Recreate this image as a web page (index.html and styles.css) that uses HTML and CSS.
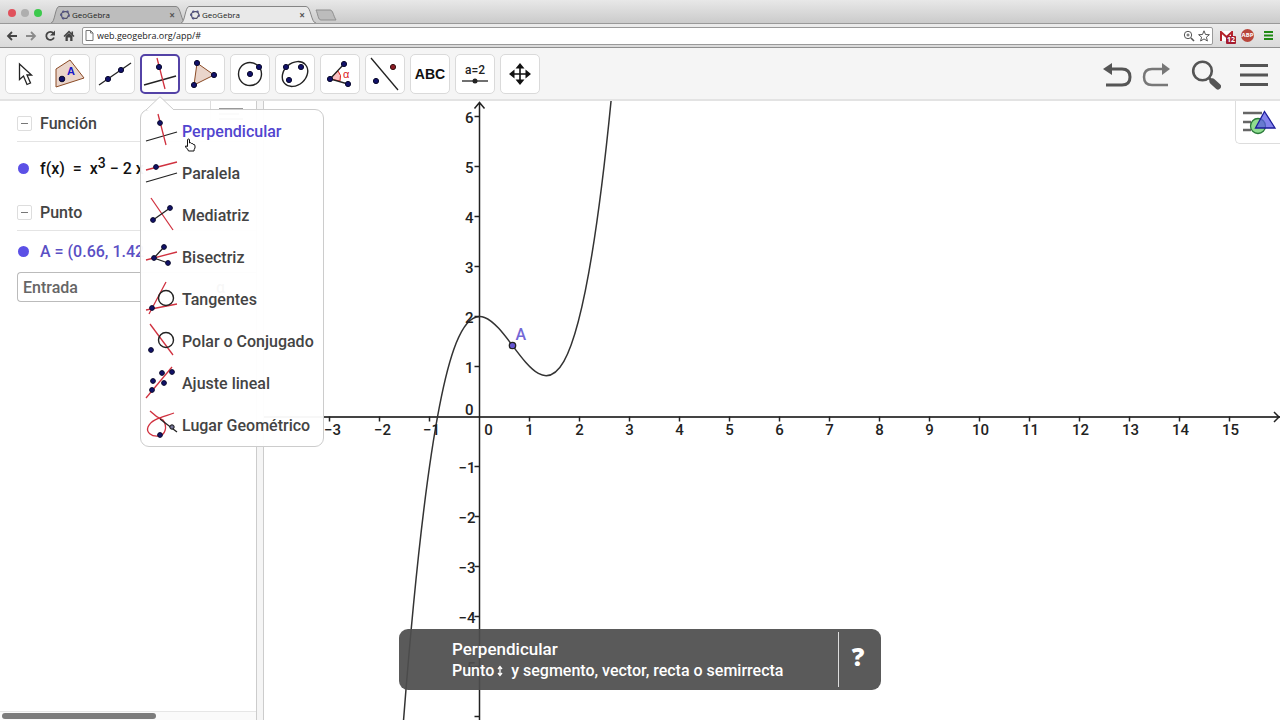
FILE: index.html
```html
<!DOCTYPE html>
<html lang="es">
<head>
<meta charset="utf-8">
<title>GeoGebra</title>
<link rel="stylesheet" href="styles.css">
</head>
<body>
<div class="app">
  <header class="browser">
    <div class="tabstrip">
      <span class="light red"></span><span class="light gray"></span><span class="light green"></span>
      <div class="tabs">
        <div class="tab">
          <svg class="tab-shape" viewBox="0 0 136 17" preserveAspectRatio="none"><path d="M0 17C4 17 4 1 8 .5H126C131 .5 131 17 136 17" fill="#bdbdbd" stroke="#858585"/></svg>
          <svg class="favicon" viewBox="0 0 12 12"><path d="M4 2L9 2L11 6L8 10L3 10L1 5Z" fill="none" stroke="#556" stroke-width="1.4"/><g fill="#558"><circle cx="4" cy="2" r="1.4"/><circle cx="9" cy="2" r="1.4"/><circle cx="10.500" cy="7" r="1.400"/><circle cx="4" cy="10" r="1.4"/><circle cx="1.500" cy="6" r="1.400"/></g></svg>
          <span class="tab-title">GeoGebra</span><button class="close" aria-label="Cerrar">×</button>
        </div>
        <div class="tab active">
          <svg class="tab-shape" viewBox="0 0 136 17" preserveAspectRatio="none"><path d="M0 17C4 17 4 1 8 .5H126C131 .5 131 17 136 17" fill="#e9e9e9" stroke="#858585"/></svg>
          <svg class="favicon" viewBox="0 0 12 12"><path d="M4 2L9 2L11 6L8 10L3 10L1 5Z" fill="none" stroke="#556" stroke-width="1.4"/><g fill="#558"><circle cx="4" cy="2" r="1.4"/><circle cx="9" cy="2" r="1.4"/><circle cx="10.500" cy="7" r="1.400"/><circle cx="4" cy="10" r="1.4"/><circle cx="1.500" cy="6" r="1.400"/></g></svg>
          <span class="tab-title">GeoGebra</span><button class="close" aria-label="Cerrar">×</button>
        </div>
        <svg class="newtab" viewBox="0 0 22 12"><path d="M1 1H15C18 1 18 6 21 11H6C3 11 3 5 1 1Z" fill="#bcbcbc" stroke="#8e8e8e"/></svg>
      </div>
    </div>
    <div class="navbar">
      <button class="nav" aria-label="Atrás"><svg viewBox="0 0 12 12"><path d="M6 2L2 6L6 10M2 6H11" fill="none" stroke="#444" stroke-width="1.8"/></svg></button>
      <button class="nav" aria-label="Adelante"><svg viewBox="0 0 12 12"><path d="M6 2L10 6L6 10M10 6H1" fill="none" stroke="#8a8a8a" stroke-width="1.8"/></svg></button>
      <button class="nav" aria-label="Recargar"><svg viewBox="0 0 12 12"><path d="M9.500 3.500A4 4 0 1 0 10 7.500" fill="none" stroke="#444" stroke-width="1.800"/><path d="M11 .5V5.500H6Z" fill="#444"/></svg></button>
      <button class="nav" aria-label="Inicio"><svg viewBox="0 0 12 12"><path d="M1 6.500L6 1.500L11 6.500M9.300 5V1.500" fill="none" stroke="#444" stroke-width="1.500"/><path d="M2.500 6L6 3L9.500 6V11H7.200V7.500H4.800V11H2.500Z" fill="#444"/></svg></button>
      <div class="address">
        <svg class="page-icon" viewBox="0 0 9 11"><path d="M1 .5H5.500L8 3V10.500H1ZM5.500 .5V3H8" fill="#fff" stroke="#777"/></svg>
        <input class="url" type="text" aria-label="Dirección" value="web.geogebra.org/app/#">
        <svg class="omni" viewBox="0 0 12 12"><circle cx="5" cy="5" r="3.700" fill="none" stroke="#555"/><path d="M5 3.500V6.500M3.500 5H6.500" stroke="#555"/><path d="M8 8L11 11" stroke="#555" stroke-width="1.600"/></svg>
        <svg class="omni" viewBox="0 0 12 12"><path d="M6 .8L7.500 4.500L11.400 4.700L8.400 7.200L9.400 11L6 8.900L2.600 11L3.600 7.200L.6 4.700L4.500 4.500Z" fill="none" stroke="#555"/></svg>
      </div>
      <span class="mail"><svg viewBox="0 0 13 10"><rect width="13" height="10" fill="#fff"/><path d="M1 10V1L6.500 6L12 1V10" fill="none" stroke="#b5232c" stroke-width="2"/></svg><span class="count">12</span></span>
      <span class="abp">ABP</span>
      <button class="chrome-menu" aria-label="Menú"><svg viewBox="0 0 9 9"><path d="M0 1H9M0 4.500H9M0 8H9" stroke="#1f8a14" stroke-width="1.800"/></svg></button>
    </div>
  </header>

  <nav class="toolbar">
    <button class="tool" aria-label="Mover"><svg viewBox="0 0 38 38"><path d="M13.500 9V24.500L17.500 21L21 29.500L24.500 28L21 20H25.500Z" fill="#fff" stroke="#222" stroke-width="1.300"/></svg></button>
    <button class="tool" aria-label="Polígono con texto"><svg viewBox="0 0 38 38"><path d="M5 14L19 5L33 23L5 32Z" fill="#ead5cb" stroke="#8a4a25"/><circle class="pt" cx="11" cy="24" r="2.800"/><text class="lbl-a" x="16" y="20">A</text></svg></button>
    <button class="tool" aria-label="Recta"><svg viewBox="0 0 38 38"><path class="ln" d="M3 30L35 8"/><circle class="pt" cx="12" cy="24" r="2.600"/><circle class="pt" cx="25" cy="15" r="2.600"/></svg></button>
    <div class="tool-group">
      <button class="tool selected" aria-label="Perpendicular"><svg viewBox="0 0 36 36"><path class="ln" d="M2 29L34 20"/><path class="rd" d="M15 2L23 33"/><circle class="pt" cx="17" cy="11" r="2.600"/></svg></button>
      <div class="dropdown">
        <svg class="pointer" viewBox="0 0 28 14"><path d="M0 14L14 .7L28 14Z" fill="#fff"/><path d="M0 14L14 .7L28 14" fill="none" stroke="#ccc"/></svg>
        <button class="item current"><svg viewBox="0 0 32 32"><path class="ln" d="M0 26L31 17"/><path class="rd" d="M12 -1L20 30"/><circle class="pt" cx="14" cy="8" r="2.400"/></svg>Perpendicular</button>
        <button class="item"><svg viewBox="0 0 32 32"><path class="ln" d="M0 25L31 16"/><path class="rd" d="M0 13L31 5"/><circle class="pt" cx="10" cy="10" r="2.400"/></svg>Paralela</button>
        <button class="item"><svg viewBox="0 0 32 32"><path class="rd" d="M5 -1L27 31"/><path class="ln" d="M7 21L24 9"/><circle class="pt" cx="7" cy="21" r="2.400"/><circle class="pt" cx="24" cy="9" r="2.400"/></svg>Mediatriz</button>
        <button class="item"><svg viewBox="0 0 32 32"><path class="rd" d="M0 19L31 11"/><path class="ln" d="M18 6L8 17L22 22"/><circle class="pt" cx="18" cy="6" r="2.400"/><circle class="pt" cx="8" cy="17" r="2.400"/><circle class="pt" cx="22" cy="22" r="2.400"/></svg>Bisectriz</button>
        <button class="item"><svg viewBox="0 0 32 32"><path class="rd" d="M3 31L20 -1M0 27L31 21"/><circle class="ring" cx="20" cy="15" r="7.500"/><circle class="pt" cx="6" cy="25" r="2.400"/></svg>Tangentes</button>
        <button class="item"><svg viewBox="0 0 32 32"><path class="rd" d="M4 -1L27 30"/><circle class="ring" cx="20" cy="15" r="7.500"/><circle class="pt" cx="5" cy="25" r="2.400"/></svg>Polar o Conjugado</button>
        <button class="item"><svg viewBox="0 0 32 32"><path class="rd" d="M0 31L26 0"/><circle class="pt" cx="16" cy="6" r="2.400"/><circle class="pt" cx="26" cy="5" r="2.400"/><circle class="pt" cx="7" cy="14" r="2.400"/><circle class="pt" cx="18" cy="16" r="2.400"/><circle class="pt" cx="6" cy="23" r="2.400"/></svg>Ajuste lineal</button>
        <button class="item"><svg viewBox="0 0 32 32"><path class="rd" d="M4 2Q10 8 17 11C22 18 19 26 13 27C5 28 0 23 2 18C5 10 17 8 28 4"/><path class="ln" d="M14 10L31 23"/><circle cx="26" cy="18" r="2.200" fill="#779" stroke="#111"/><circle class="pt" cx="14" cy="26" r="2.400"/></svg>Lugar Geométrico</button>
        <svg class="hand" viewBox="0 0 12 14"><path d="M3.500 7V2Q3.500 1 4.500 1T5.500 2V5Q7 4 7.500 5.500Q9 5 9.200 6.500Q11 6 11 8V10Q10 11 10 13H4.500Q4 11 1.500 9Q1 7 3.500 8.500Z" fill="#fff" stroke="#111"/></svg>
      </div>
    </div>
    <button class="tool" aria-label="Polígono"><svg viewBox="0 0 38 38"><path d="M11 8L28 20L8 30Z" fill="#ead5cb" stroke="#8a4a25"/><circle class="pt" cx="11" cy="8" r="2.600"/><circle class="pt" cx="28" cy="20" r="2.600"/><circle class="pt" cx="8" cy="30" r="2.600"/></svg></button>
    <button class="tool" aria-label="Circunferencia"><svg viewBox="0 0 38 38"><circle class="ring" cx="19" cy="19" r="11.500"/><circle class="pt" cx="19" cy="19" r="2.600"/><circle class="pt" cx="28" cy="12" r="2.600"/></svg></button>
    <button class="tool" aria-label="Elipse"><svg viewBox="0 0 38 38"><ellipse class="ring" cx="19" cy="19" rx="14" ry="11" transform="rotate(-42 19 19)"/><circle class="pt" cx="10" cy="12" r="2.600"/><circle class="pt" cx="25" cy="12" r="2.600"/><circle class="pt" cx="13" cy="25" r="2.600"/></svg></button>
    <button class="tool" aria-label="Ángulo"><svg viewBox="0 0 38 38"><path d="M9 24L17 16Q21 20 19 26Z" fill="#fbc0c0" stroke="#d22"/><path class="ln" d="M23 9L9 24L27 29"/><circle class="pt" cx="23" cy="9" r="2.600"/><circle class="pt" cx="9" cy="24" r="2.600"/><circle class="pt" cx="27" cy="29" r="2.600"/><text class="alpha" x="22" y="23">α</text></svg></button>
    <button class="tool" aria-label="Simetría"><svg viewBox="0 0 38 38"><path class="ln" d="M5 3L32 35"/><circle class="pt" cx="10" cy="26" r="2.600"/><circle cx="27" cy="12" r="2.600" fill="#8b1a24" stroke="#311"/></svg></button>
    <button class="tool abc">ABC</button>
    <button class="tool slider" aria-label="Deslizador"><span>a=2</span><svg viewBox="0 0 26 6"><path d="M0 3H26" stroke="#333" stroke-width="1.400"/><circle cx="13" cy="3" r="2.500" fill="#222"/></svg></button>
    <button class="tool" aria-label="Desplazar"><svg viewBox="0 0 38 38"><path d="M19 11V27M11 19H27" stroke="#111" stroke-width="1.600"/><path d="M19 8L23.500 13.500H14.500ZM19 30L14.500 24.500H23.500ZM8 19L13.500 14.500V23.500ZM30 19L24.500 23.500V14.500Z" fill="#111"/></svg></button>
    <div class="actions">
      <button class="act" aria-label="Deshacer"><svg viewBox="0 0 30 30"><path d="M8 9H19Q27 9 27 17T19 25H3" fill="none" stroke="#555" stroke-width="3"/><path d="M0 9L9 3V15Z" fill="#555"/></svg></button>
      <button class="act redo" aria-label="Rehacer"><svg viewBox="0 0 30 30"><path d="M22 9H11Q3 9 3 17T11 25H27" fill="none" stroke="#777" stroke-width="2.500"/><path d="M29 9L21 3V15Z" fill="#777"/></svg></button>
      <button class="act search" aria-label="Buscar"><svg viewBox="0 0 30 30"><circle cx="11.500" cy="11" r="9.300" fill="none" stroke="#555" stroke-width="2.600"/><path d="M18 18L22 22" stroke="#555" stroke-width="3"/><path d="M21.500 21.500L27 26.500" stroke="#555" stroke-width="6" stroke-linecap="round"/></svg></button>
      <button class="act menu" aria-label="Menú"><svg viewBox="0 0 30 30"><path d="M1 5.500H29M1 15H29M1 24.500H29" stroke="#555" stroke-width="3"/></svg></button>
    </div>
  </nav>

  <main class="work">
    <section class="algebra">
      <div class="style-bar"><svg viewBox="0 0 24 16"><path d="M0 3H24M0 8H20M0 13H24" stroke="#999" stroke-width="2"/></svg></div>
      <div class="group"><button class="fold" aria-label="Plegar Función"></button>Función</div>
      <div class="row formula"><i class="dot"></i><span>f(x) &nbsp;= &nbsp;x<sup>3</sup> − 2 x</span></div>
      <div class="group"><button class="fold" aria-label="Plegar Punto"></button>Punto</div>
      <div class="row point"><i class="dot"></i><span>A = (0.66, 1.42</span></div>
      <div class="entry"><input type="text" placeholder="Entrada" aria-label="Entrada"><button class="symbols">α</button></div>
      <div class="scroll"><div class="thumb"></div></div>
    </section>
    <div class="splitter"></div>
    <section class="graph">
      <svg class="plot" width="100%" height="100%">
        <path d="M0 316H2000" stroke="#444" stroke-width="2"/>
        <svg x="100%" y="316" overflow="visible"><path d="M-6 -5L-1 0L-6 5" fill="none" stroke="#222" stroke-width="1.500"/></svg>
        <g transform="translate(215.500 315.500)">
          <path d="M0 -314V600M-5 -308L0 -314L5 -308" fill="none" stroke="#222" stroke-width="1.500"/>
          <path d="M-80.200 360.800C-8.400 -648.300 63.500 438.200 135.300 -355.200" fill="none" stroke="#333" stroke-width="1.500"/>
          <path d="M-150 0V5M-100 0V5M-50 0V5M50 0V5M100 0V5M150 0V5M200 0V5M250 0V5M300 0V5M350 0V5M400 0V5M450 0V5M500 0V5M550 0V5M600 0V5M650 0V5M700 0V5M750 0V5M-5 -300H0M-5 -250H0M-5 -200H0M-5 -150H0M-5 -100H0M-5 -50H0M-5 50H0M-5 100H0M-5 150H0M-5 200H0M-5 250H0M-5 300H0" stroke="#222" stroke-width="1.500"/>
          <g class="xl">
            <text x="-147" y="18">−3</text><text x="-97" y="18">−2</text><text x="-48" y="18">−1</text><text x="9" y="18">0</text><text x="50" y="18">1</text><text x="100" y="18">2</text><text x="150" y="18">3</text><text x="200" y="18">4</text><text x="250" y="18">5</text><text x="300" y="18">6</text><text x="350" y="18">7</text><text x="400" y="18">8</text><text x="450" y="18">9</text><text x="501" y="18">10</text><text x="551" y="18">11</text><text x="601" y="18">12</text><text x="651" y="18">13</text><text x="701" y="18">14</text><text x="751" y="18">15</text>
          </g>
          <g class="yl">
            <text x="-6" y="-294">6</text><text x="-6" y="-244">5</text><text x="-6" y="-194">4</text><text x="-6" y="-144">3</text><text x="-6" y="-94">2</text><text x="-6" y="-44">1</text><text x="-6" y="-2">0</text><text x="-4" y="56">−1</text><text x="-4" y="106">−2</text><text x="-4" y="156">−3</text><text x="-4" y="206">−4</text><text x="-4" y="256">−5</text>
          </g>
          <circle cx="33" cy="-71" r="3.200" fill="#6557d2" stroke="#222" stroke-width="1.300"/>
          <text class="a-label" x="36" y="-77">A</text>
        </g>
      </svg>
      <button class="style-btn" aria-label="Estilo"><svg viewBox="0 0 34 26"><path d="M0 4H19M0 13H8M0 21H8" stroke="#666" stroke-width="2.500"/><circle cx="15" cy="17" r="7.500" fill="#8fdc8f" stroke="#2a7a3a" stroke-width="1.300"/><path d="M21.500 2.500L32 19H12.500Z" fill="#5b5be6" fill-opacity=".75" stroke="#1c1c9a" stroke-width="1.300"/></svg></button>
    </section>
  </main>

  <aside class="toast">
    <div class="toast-text"><strong>Perpendicular</strong><span>Punto<svg class="updown" viewBox="0 0 8 12"><path d="M4 2V10M2 4L4 1.500L6 4M2 8L4 10.500L6 8" fill="none" stroke="#fff" stroke-width="1.300"/></svg> y segmento, vector, recta o semirrecta</span></div>
    <button class="help" aria-label="Ayuda">?</button>
  </aside>
</div>
</body>
</html>
```

FILE: styles.css
```css
* { box-sizing: border-box; }
body { margin: 0; font-family: Roboto, "Liberation Sans", sans-serif; background: #fff; color: #444; }
button { font: inherit; color: inherit; border: 0; padding: 0; margin: 0; background: none; }
svg { display: block; flex: none; }
.app { position: relative; display: flex; flex-direction: column; height: 100vh; overflow: hidden; }

/* browser window */
.browser { flex: none; font-family: "Open Sans", sans-serif; color: #222; }
.tabstrip { display: flex; align-items: center; height: 24px; padding: 2px 0 0 8px; gap: 5px; background: linear-gradient(#e8e8e8, #cbcbcb); border-bottom: 1px solid #999; }
.light { width: 8px; height: 8px; border-radius: 50%; }
.red { background: #e0515c; }
.gray { background: #aeaeae; }
.green { background: #3cc94c; }
.tabs { display: flex; align-self: flex-end; align-items: center; padding-left: 4px; }
.tab { position: relative; display: flex; align-items: center; width: 135px; height: 17px; padding: 1px 11px 0 9px; margin-right: -5px; }
.tab.active { z-index: 1; }
.tab-shape { position: absolute; inset: 0; width: 100%; height: 100%; }
.favicon { position: relative; width: 10px; height: 10px; }
.tab-title { position: relative; flex: 1; padding-left: 2px; font-size: 8px; font-weight: 500; line-height: 12px; }
.close { position: relative; font-size: 10px; font-weight: 700; line-height: 12px; color: #555; }
.newtab { width: 22px; height: 12px; margin-left: 4px; }
.navbar { display: flex; align-items: center; height: 24px; padding: 0 7px 0 6px; gap: 7px; background: linear-gradient(#ececec, #dadada); border-bottom: 1px solid #8f8f8f; }
.nav svg { width: 12px; height: 12px; }
.address { display: flex; align-items: center; flex: 1; min-width: 0; height: 18px; padding: 0 2px 0 2px; gap: 3px; background: #fff; border: 1px solid #9a9a9a; border-radius: 2px; }
.page-icon { width: 9px; height: 11px; }
.url { flex: 1; min-width: 0; height: 16px; padding: 0; border: 0; outline: 0; background: none; font: 9px "Open Sans", sans-serif; color: #222; }
.omni { width: 12px; height: 12px; }
.mail { position: relative; width: 14px; height: 10px; }
.mail svg { width: 13px; height: 10px; }
.count { position: absolute; left: 6px; top: 5px; padding: 0 1px; font-size: 7px; font-weight: 700; line-height: 8px; color: #fff; background: #a51c30; border-radius: 1px; }
.abp { width: 13px; height: 13px; border-radius: 50%; background: #b8463c; color: #fff; font-size: 6px; font-weight: 700; line-height: 13px; text-align: center; }
.chrome-menu { padding-left: 3px; }
.chrome-menu svg { width: 9px; height: 9px; }

/* toolbar */
.toolbar { position: relative; z-index: 2; display: flex; flex: none; align-items: flex-start; height: 53px; padding: 6px 11px 0 5px; gap: 5px; background: #f5f5f5; border-bottom: 2px solid #e3e3e3; }
.tool { flex: none; width: 40px; height: 40px; background: #fff; border: 1px solid #dadada; border-radius: 5px; }
.tool > svg { width: 38px; height: 38px; }
.tool.selected { border: 2px solid #5342a6; }
.tool.selected > svg { width: 36px; height: 36px; }
.ln { fill: none; stroke: #222; stroke-width: 1.3px; }
.rd { fill: none; stroke: #d0313f; stroke-width: 1.3px; }
.pt { fill: #11116a; stroke: #0a0a2c; }
.ring { fill: none; stroke: #222; stroke-width: 1.4px; }
.lbl-a { font: 700 11px "Liberation Sans", sans-serif; fill: #1818c8; }
.alpha { font: 11px "Liberation Sans", sans-serif; fill: #d22; }
.abc { font: 700 14px "Liberation Sans", sans-serif; color: #111; }
.slider { display: flex; flex-direction: column; align-items: center; justify-content: center; gap: 2px; font-size: 12px; font-weight: 500; line-height: 12px; color: #222; }
.tool.slider > svg { width: 26px; height: 6px; }
.actions { display: flex; align-items: center; height: 42px; gap: 8px; margin-left: auto; }
.act svg { width: 30px; height: 30px; }
.search { margin-left: 12px; }
.menu { margin-left: 10px; }

/* tool menu */
.tool-group { position: relative; flex: none; height: 40px; }
.dropdown { position: absolute; left: 0; top: 55px; width: max-content; min-width: 184px; background: rgba(255, 255, 255, 0.96); border: 1px solid #ccc; border-radius: 9px; }
.pointer { position: absolute; left: 5px; top: -14px; width: 28px; height: 14px; }
.item { display: flex; align-items: center; width: 100%; height: 42px; padding: 0 8px 0 5px; gap: 4px; font-size: 16px; font-weight: 500; white-space: nowrap; }
.item svg { width: 32px; height: 32px; overflow: visible; }
.item.current { color: #5145cf; }
.hand { position: absolute; left: 43px; top: 28px; width: 12px; height: 14px; }

/* algebra list */
.work { display: flex; flex: 1; min-height: 0; }
.algebra { position: relative; display: flex; flex-direction: column; width: 256px; font-size: 16px; font-weight: 500; }
.style-bar { position: absolute; top: 0; right: 0; width: 46px; height: 40px; padding: 5px 8px; border-left: 1px solid #ddd; }
.style-bar svg { width: 24px; height: 16px; }
.group { display: flex; align-items: center; flex: none; height: 41px; margin-left: 17px; padding-top: 5px; gap: 8px; border-bottom: 1px solid #e4e4e4; }
.fold { width: 15px; height: 15px; padding: 0 3px; border: 1px solid #ddd; border-radius: 2px; }
.fold::before { content: ""; display: block; height: 1px; background: #777; }
.row { display: flex; align-items: center; flex: none; padding-left: 18px; gap: 11px; white-space: nowrap; }
.dot { width: 11px; height: 11px; border-radius: 50%; background: #5b50e6; }
.formula { height: 48px; padding-top: 4px; color: #111; }
.formula sup { font-size: 14px; line-height: 0; }
.point { height: 41px; color: #5a4fc4; }
.entry { display: flex; flex: none; height: 30px; margin-left: 17px; padding: 0 31px 0 5px; border: 1px solid #bbb; border-right: 0; border-radius: 4px 0 0 4px; }
.entry input { flex: 1; min-width: 0; padding: 0; border: 0; outline: 0; background: none; font: 500 16px Roboto, sans-serif; }
.entry input::placeholder { color: #666; }
.scroll { height: 9px; margin-top: auto; padding: 1px 2px; background: #fafafa; border-top: 1px solid #e6e6e6; }
.thumb { width: 61%; height: 6px; border-radius: 3px; background: #7c7c7c; }
.splitter { flex: none; width: 8px; background: #f5f5f5; border: solid #ccc; border-width: 0 1px; }

/* graph */
.graph { position: relative; flex: 1; min-width: 0; overflow: hidden; }
.plot { font-size: 15px; font-weight: 500; fill: #222; }
.xl { text-anchor: middle; }
.yl { text-anchor: end; }
.a-label { fill: #7367d6; font-size: 16px; }
.style-btn { position: absolute; top: 0; right: 0; padding: 8px 3px 8px 7px; border: solid #ddd; border-width: 0 0 1px 1px; border-radius: 0 0 0 5px; background: #fff; }
.style-btn svg { width: 34px; height: 26px; }

/* help toast */
.toast { position: absolute; z-index: 3; left: 50%; bottom: 30px; display: flex; align-items: stretch; width: 482px; height: 61px; transform: translateX(-50%); padding: 3px 0; border-radius: 9px; background: rgba(78, 78, 78, 0.93); color: #fff; }
.toast-text { display: flex; flex: 1; flex-direction: column; justify-content: center; padding-left: 53px; font-size: 16px; font-weight: 500; line-height: 22px; white-space: nowrap; }
.toast-text strong { font-size: 17px; font-weight: 500; }
.updown { display: inline-block; width: 8px; height: 12px; margin: 0 3px 0 2px; vertical-align: -1px; }
.help { width: 43px; padding: 0 4px 7px 0; border-left: 1px solid #ddd; font: 800 25px "Open Sans", sans-serif; }
```
